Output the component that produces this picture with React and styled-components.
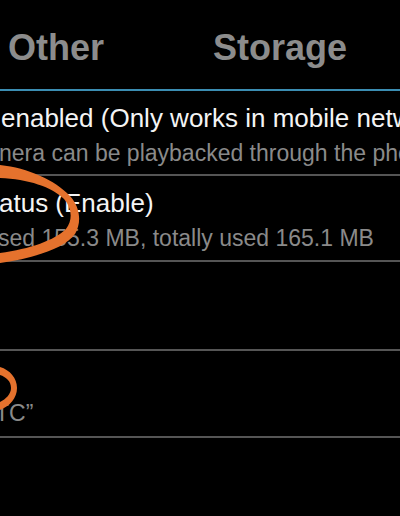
import React from "react"
import styled, { createGlobalStyle } from "styled-components"

const GlobalStyle = createGlobalStyle`
  html, body {
    margin: 0;
    padding: 0;
    background: #000;
    overflow: hidden;
  }
  body {
    font-family: "Liberation Sans", Arial, sans-serif;
  }
`

const Screen = styled.div`
  position: relative;
  width: 400px;
  height: 516px;
  background: #000;
  overflow: hidden;
`

const TabBar = styled.div`
  display: flex;
  height: 89px;
  margin-left: -56px;
  border-bottom: 2px solid #3b8db2;
`

const Tab = styled.div`
  flex: 0 0 224px;
  box-sizing: border-box;
  padding-top: 28px;
  text-align: center;
  font-size: 36px;
  line-height: 40px;
  font-weight: 700;
  color: #8c8c8c;
`

const List = styled.div`
  display: flex;
  flex-direction: column;
`

const Row = styled.div`
  box-sizing: border-box;
  height: ${(p) => p.$height || 86}px;
  padding-top: 11px;
  border-bottom: 2px solid #555;
  overflow: hidden;
`

const Title = styled.div`
  margin-left: ${(p) => p.$shift || 0}px;
  height: 32px;
  font-size: 26px;
  line-height: 32px;
  color: #f4f4f4;
  white-space: nowrap;
`

const Summary = styled.div`
  margin-top: 4px;
  margin-left: ${(p) => p.$shift || 0}px;
  font-size: 23px;
  line-height: 30px;
  color: #8a8a8a;
  white-space: nowrap;
`

const Marks = styled.svg`
  position: absolute;
  left: 0;
  top: 0;
  pointer-events: none;
`

const rows = [
  {
    title: "enabled (Only works in mobile network)",
    summary: "nera can be playbacked through the phone",
    titleShift: 1,
    summaryShift: -1,
    height: 85,
  },
  {
    title: "atus (Enable)",
    summary: "sed 155.3 MB, totally used 165.1 MB",
    titleShift: -1,
    summaryShift: -2,
    height: 86,
  },
  { title: "", summary: "", height: 89 },
  { title: "", summary: "TC\u201d", summaryShift: -5, height: 87 },
]

export default function App() {
  return (
    <Screen>
      <GlobalStyle />
      <TabBar>
        <Tab>Other</Tab>
        <Tab>Storage</Tab>
      </TabBar>
      <List>
        {rows.map((r, i) => (
          <Row key={i} $height={r.height}>
            <Title $shift={r.titleShift}>{r.title}</Title>
            <Summary $shift={r.summaryShift}>{r.summary}</Summary>
          </Row>
        ))}
      </List>
      <Marks width="400" height="516" viewBox="0 0 400 516">
        <path
          fill="#e5722d"
          d="M0,165 C28,168 55,180 70,196 C80,207 82,222 75,234 C65,248 35,258 0,263 L0,253 C30,249 55,240 66,229 C73,220 72,208 64,199 C52,187 28,179 0,178 Z"
        />
        <path
          fill="#e5722d"
          d="M0,367 C10,370 17,378 17,388 C17,398 10,406 0,410 L0,402 C6,399 11,394 11,388 C11,381 6,377 0,375 Z"
        />
      </Marks>
    </Screen>
  )
}
